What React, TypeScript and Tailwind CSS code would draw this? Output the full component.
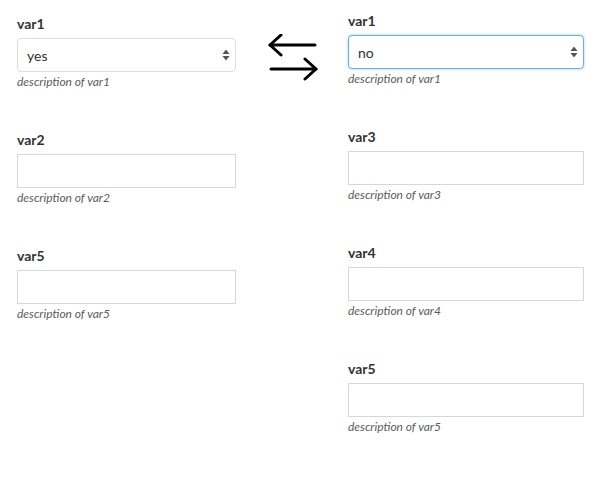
import React from "react";

const font = { fontFamily: "Lato, 'Open Sans', sans-serif" };

function SelectArrows() {
    return (
        <svg width="8" height="12" viewBox="0 0 8 12" className="absolute right-[5px] top-1/2 -translate-y-1/2">
            <path d="M4 0.5 L7.5 5 L0.5 5 Z" fill="#555" />
            <path d="M4 11.5 L7.5 7 L0.5 7 Z" fill="#555" />
        </svg>
    );
}

function Field({ name, kind, value, focused }: { name: string; kind: "select" | "text"; value?: string; focused?: boolean }) {
    return (
        <div className="mb-[40px]">
            <label className="block text-[14px] leading-[20px] font-bold text-[#333] mb-[4px]">{name}</label>
            {kind === "select" ? (
                <div
                    className={
                        focused
                            ? "relative h-[34px] rounded-[4px] border border-[#66afe9] bg-white shadow-[0_0_3px_rgba(102,175,233,0.6)] flex items-center pl-[9px]"
                            : "relative h-[34px] rounded-[4px] border border-[#dcdce3] bg-white flex items-center pl-[9px]"
                    }
                >
                    <span className="text-[14px] text-[#333]">{value}</span>
                    <SelectArrows />
                </div>
            ) : (
                <div className="h-[34px] border border-[#d6d6df] bg-white" />
            )}
            <p className="mt-[2px] text-[12px] leading-[16px] italic text-[#5c5c5c]">description of {name}</p>
        </div>
    );
}

function SwapArrows() {
    return (
        <svg width="50" height="50" viewBox="0 0 50 50" fill="none" stroke="#000" strokeWidth="3" strokeLinecap="round" strokeLinejoin="round">
            <path d="M2 11 H47" />
            <path d="M13 1 L2 11 L13 21" />
            <path d="M3 35 H48" />
            <path d="M37 25 L48 35 L37 45" />
        </svg>
    );
}

export default function App() {
    return (
        <div className="w-[596px] h-[480px] bg-white flex" style={font}>
            <div className="w-[219px] ml-[17px] pt-[14px]">
                <Field name="var1" kind="select" value="yes" />
                <Field name="var2" kind="text" />
                <Field name="var5" kind="text" />
            </div>
            <div className="w-[112px] pt-[34px] pl-[32px]">
                <SwapArrows />
            </div>
            <div className="w-[236px] pt-[11px]">
                <Field name="var1" kind="select" value="no" focused />
                <Field name="var3" kind="text" />
                <Field name="var4" kind="text" />
                <Field name="var5" kind="text" />
            </div>
        </div>
    );
}
